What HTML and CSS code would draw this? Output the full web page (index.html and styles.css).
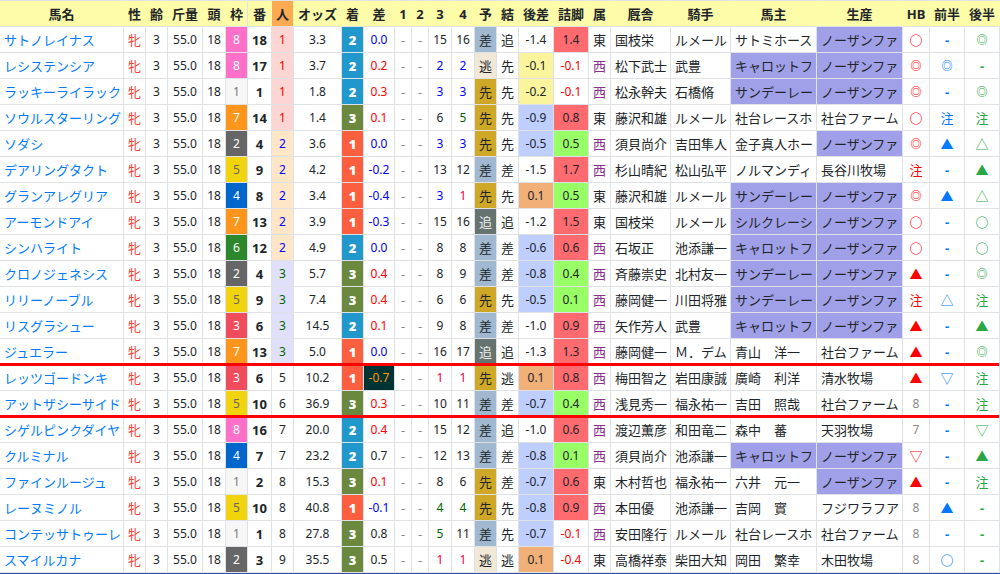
FILE: index.html
```html
<!DOCTYPE html>
<html lang="ja">
<head>
  <meta charset="UTF-8">
  <meta name="viewport" content="width=device-width, initial-scale=1.0">
  <title>桜花賞</title>
  <link rel="stylesheet" href="styles.css">
</head>
<body>
  <table class="race-table">
    <colgroup>
      <col class="w-name"><col class="w-mark"><col class="w-mark"><col class="w-diff"><col class="w-pass">
      <col class="w-mark"><col class="w-num"><col class="w-mark"><col class="w-odds"><col class="w-mark">
      <col class="w-sa"><col class="w-corner"><col class="w-corner"><col class="w-pass"><col class="w-pass">
      <col class="w-mark"><col class="w-mark"><col class="w-diff"><col class="w-diff"><col class="w-mark">
      <col class="w-person"><col class="w-person"><col class="w-owner"><col class="w-owner"><col class="w-hb">
      <col class="w-diff"><col class="w-diff">
    </colgroup>
    <thead>
      <tr>
        <th>馬名</th><th>性</th><th>齢</th><th>斤量</th><th>頭</th><th class="split">枠</th><th>番</th>
        <th class="sorted">人</th><th>オッズ</th><th>着</th><th>差</th>
        <th>1</th><th>2</th><th>3</th><th>4</th>
        <th>予</th><th>結</th><th>後差</th><th>詰脚</th><th>属</th><th>厩舎</th><th>騎手</th>
        <th>馬主</th><th>生産</th><th>HB</th><th>前半</th><th>後半</th>
      </tr>
    </thead>
    <tbody id="raceBody"></tbody>
  </table>

  <script src="script.js"></script>
</body>
</html>
```

FILE: styles.css
```css
body {
  margin: 0;
  background-color: #fff;
  color: #212529;
  font-family: "Noto Sans", "Noto Sans CJK JP", sans-serif;
  font-size: 13px;
  line-height: 20px;
}

a {
  color: #007bff;
  text-decoration: none;
}

.race-table {
  width: 100%;
  table-layout: fixed;
  border-collapse: separate;
  border-spacing: 0;
  border-bottom: 1px solid #2f5597;
}

/* Column widths */
.w-name { width: 124px; }
.w-mark { width: 22px; }
.w-num { width: 24px; }
.w-pass { width: 23px; }
.w-corner { width: 17px; }
.w-sa { width: 31px; }
.w-diff { width: 35px; }
.w-odds { width: 48px; }
.w-person { width: 60px; }
.w-owner { width: 86px; }
.w-hb { width: 27px; }

th,
td {
  box-sizing: border-box;
  height: 26px;
  padding: 0;
  border-right: 1px solid #dee2e6;
  border-bottom: 1px solid #dee2e6;
  text-align: center;
  white-space: nowrap;
}

th {
  height: 27px;
  border-top: 1px solid #dee2e6;
  border-right-color: #fdfca8;
  background-color: #fdfca8;
  font-weight: bold;
}

th.split {
  border-right-color: #dee2e6;
}

th.sorted {
  background-color: #fcaa52;
}

.num {
  font-size: 12px;
}

.text {
  padding-left: 4px;
  text-align: left;
}

/* Red line between groups, drawn over the cell borders */
.line-below td {
  position: relative;
}

.line-below td::after {
  content: "";
  position: absolute;
  z-index: 1;
  left: 0;
  right: -1px;
  bottom: -2px;
  height: 3px;
  background-color: #f00;
}

.line-below td:last-child::after {
  right: 0;
}

.sex { color: #f44336; }
.none { color: #888; }
.west { color: #8b2f8b; }
.red { color: #f00; }
.crimson { color: #f0003c; }
.blue { color: #00f; }
.green { color: #006400; }
.best { background-color: #033; color: #f90; }

/* 枠 */
.waku1 { background-color: #f7f7f7; color: #777; }
.waku2 { background-color: #666; color: #fff; }
.waku3 { background-color: #f04c5c; color: #fff; }
.waku4 { background-color: #0066cc; color: #fff; }
.waku5 { background-color: #f2d40d; color: #666; }
.waku6 { background-color: #2d882d; color: #fff; }
.waku7 { background-color: #fc961c; color: #fff; }
.waku8 { background-color: #ff70c8; color: #fff; }

.ban {
  font-weight: bold;
}

/* 人気 */
.nin1 { background-color: #fdd5d2; color: #f00; }
.nin2 { background-color: #ffe6c6; color: #00f; }
.nin3 { background-color: #e0e0fb; color: #006400; }

/* 着順 */
.chaku {
  color: #fff;
  font-weight: 900;
}

.chaku1 { background-color: #fc5f3f; }
.chaku2 { background-color: #2098cc; }
.chaku3 { background-color: #6b893e; }

/* 脚質 */
.nige { background-color: #f2e8d8; }
.senko { background-color: #d0a828; }
.sashi { background-color: #a0b8d0; }
.oikomi { background-color: #66736f; color: #eee; }

.diff-plus { background-color: #f0b078; }
.diff-near { background-color: #faf49c; }
.diff-mid { background-color: #bdceff; }
.leg-low { background-color: #99ff66; }
.leg-high { background-color: #ff6b6f; }

.group { background-color: #a0a0e8; }

/* 印 */
.hb { color: #f00; }
.first { color: #007bff; }
.last { color: #28a745; }
.hb.num { color: #888; }
.bold { font-weight: bold; }

.double {
  font-size: 11px;
  font-weight: bold;
}
```

FILE: script.js
```js
// 馬名,枠,番,人気,オッズ,着,差,3角,4角,予,結,後差,詰脚,属,厩舎,騎手,馬主,生産,HB,前半,後半
const rows = [
  'サトノレイナス,8,18,1,3.3,2,0.0,15,16,差,追,-1.4,1.4,東,国枝栄,ルメール,サトミホース,ノーザンファ,○,-,◎',
  'レシステンシア,8,17,1,3.7,2,0.2,2,2,逃,先,-0.1,-0.1,西,松下武士,武豊,キャロットフ,ノーザンファ,◎,◎,-',
  'ラッキーライラック,1,1,1,1.8,2,0.3,3,3,先,先,-0.2,-0.1,西,松永幹夫,石橋脩,サンデーレー,ノーザンファ,◎,-,◎',
  'ソウルスターリング,7,14,1,1.4,3,0.1,6,5,先,先,-0.9,0.8,東,藤沢和雄,ルメール,社台レースホ,社台ファーム,○,注,注',
  'ソダシ,2,4,2,3.6,1,0.0,3,3,先,先,-0.5,0.5,西,須貝尚介,吉田隼人,金子真人ホー,ノーザンファ,◎,▲,△',
  'デアリングタクト,5,9,2,4.2,1,-0.2,13,12,差,差,-1.5,1.7,西,杉山晴紀,松山弘平,ノルマンディ,長谷川牧場,注,-,▲',
  'グランアレグリア,4,8,2,3.4,1,-0.4,3,1,先,先,0.1,0.5,東,藤沢和雄,ルメール,サンデーレー,ノーザンファ,◎,▲,△',
  'アーモンドアイ,7,13,2,3.9,1,-0.3,15,16,追,追,-1.2,1.5,東,国枝栄,ルメール,シルクレーシ,ノーザンファ,○,-,○',
  'シンハライト,6,12,2,4.9,2,0.0,8,8,差,差,-0.6,0.6,西,石坂正,池添謙一,キャロットフ,ノーザンファ,○,-,○',
  'クロノジェネシス,2,4,3,5.7,3,0.4,8,9,差,差,-0.8,0.4,西,斉藤崇史,北村友一,サンデーレー,ノーザンファ,▲,-,◎',
  'リリーノーブル,5,9,3,7.4,3,0.4,6,6,先,先,-0.5,0.1,西,藤岡健一,川田将雅,サンデーレー,ノーザンファ,注,△,注',
  'リスグラシュー,3,6,3,14.5,2,0.1,9,8,差,差,-1.0,0.9,西,矢作芳人,武豊,キャロットフ,ノーザンファ,▲,-,▲',
  'ジュエラー,7,13,3,5.0,1,0.0,16,17,追,追,-1.3,1.3,西,藤岡健一,\uff2d\uff0eデム,青山\u3000洋一,社台ファーム,▲,-,◎',
  'レッツゴードンキ,3,6,5,10.2,1,-0.7,1,1,先,逃,0.1,0.8,西,梅田智之,岩田康誠,廣崎\u3000利洋,清水牧場,▲,▽,注',
  'アットザシーサイド,5,10,6,36.9,3,0.3,10,11,差,差,-0.7,0.4,西,浅見秀一,福永祐一,吉田\u3000照哉,社台ファーム,8,-,注',
  'シゲルピンクダイヤ,8,16,7,20.0,2,0.4,15,12,差,追,-1.0,0.6,西,渡辺薫彦,和田竜二,森中\u3000蕃,天羽牧場,7,-,▽',
  'クルミナル,4,7,7,23.2,2,0.7,12,13,差,差,-0.8,0.1,西,須貝尚介,池添謙一,キャロットフ,ノーザンファ,▽,-,▲',
  'ファインルージュ,1,2,8,15.3,3,0.1,8,6,先,差,-0.7,0.6,東,木村哲也,福永祐一,六井\u3000元一,ノーザンファ,▲,-,注',
  'レーヌミノル,5,10,8,40.8,1,-0.1,4,4,先,先,-0.8,0.9,西,本田優,池添謙一,吉岡\u3000實,フジワラフア,8,▲,-',
  'コンテッサトゥーレ,1,1,8,27.8,3,0.8,5,11,差,先,-0.7,-0.1,西,安田隆行,ルメール,社台レースホ,社台ファーム,8,-,-',
  'スマイルカナ,2,3,9,35.5,3,0.5,1,1,逃,逃,0.1,-0.4,東,高橋祥泰,柴田大知,岡田\u3000繁幸,木田牧場,8,○,-'
];

const legClass = { '逃': 'nige', '先': 'senko', '差': 'sashi', '追': 'oikomi' };
const groups = ['キャロットフ', 'サンデーレー', 'シルクレーシ', 'ノーザンファ'];
const lineBelow = [12, 14];

function saClass(v) {
  if (v <= -0.5) return 'best';
  if (v <= 0) return 'blue';
  return v < 0.5 ? 'red' : '';
}

function cornerClass(v) {
  if (v == 1) return 'crimson';
  if (v <= 3) return 'blue';
  return v <= 5 ? 'green' : '';
}

function diffClass(v) {
  if (v >= 0) return 'diff-plus';
  if (v > -0.5) return 'diff-near';
  return v > -1 ? 'diff-mid' : '';
}

function zumeClass(v) {
  if (v < 0) return 'red';
  return v <= 0.5 ? 'leg-low' : 'leg-high';
}

function groupClass(name) {
  return groups.includes(name) ? 'group' : '';
}

function markClass(mark) {
  if (mark === '◎') return 'double';
  if (mark === '○' || mark === '-') return 'bold';
  return /\d/.test(mark) ? 'num' : '';
}

function td(text, className) {
  return `<td class="${className}">${text}</td>`;
}

document.querySelector('#raceBody').innerHTML = rows.map((row, i) => {
  const [name, waku, ban, nin, odds, chaku, sa, c3, c4, yo, ketsu, gosa, zume,
    area, stable, jockey, owner, breeder, hb, first, last] = row.split(',');

  return `<tr class="${lineBelow.includes(i) ? 'line-below' : ''}">` +
    td(`<a href="#">${name}</a>`, 'text') +
    td('牝', 'sex') +
    td('3', 'num') +
    td('55.0', 'num') +
    td('18', 'num') +
    td(waku, `num waku${waku}`) +
    td(ban, 'ban') +
    td(nin, `num nin${nin}`) +
    td(odds, 'num') +
    td(chaku, `chaku chaku${chaku}`) +
    td(sa, `num ${saClass(sa)}`) +
    td('-', 'none') +
    td('-', 'none') +
    td(c3, `num ${cornerClass(c3)}`) +
    td(c4, `num ${cornerClass(c4)}`) +
    td(yo, legClass[yo]) +
    td(ketsu, '') +
    td(gosa, `num ${diffClass(gosa)}`) +
    td(zume, `num ${zumeClass(zume)}`) +
    td(area, area === '西' ? 'west' : '') +
    td(stable, 'text') +
    td(jockey, 'text') +
    td(owner, `text ${groupClass(owner)}`) +
    td(breeder, `text ${groupClass(breeder)}`) +
    td(hb, `hb ${markClass(hb)}`) +
    td(first, `first ${markClass(first)}`) +
    td(last, `last ${markClass(last)}`) +
    '</tr>';
}).join('');
```
